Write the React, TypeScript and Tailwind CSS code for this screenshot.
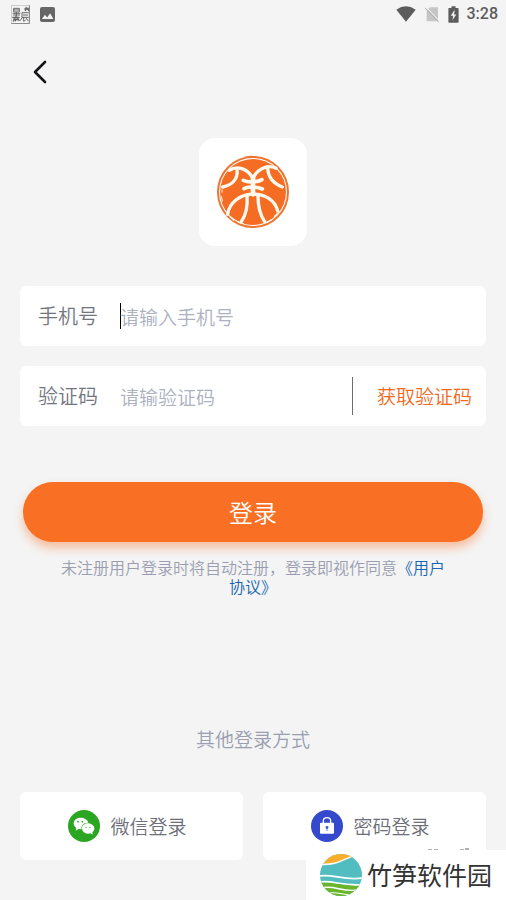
import React, { useState } from 'react';

const BackIcon = () => (
  <svg viewBox="0 0 14 24" className="h-6 w-[14px]" fill="none" stroke="#141418" strokeWidth="2.6" strokeLinecap="round" strokeLinejoin="round">
    <path d="M12 2 2 12l10 10" />
  </svg>
);

const GlyphBadge = () => (
  <svg viewBox="0 0 57 57" className="h-[19px] w-[19px]" fill="none" stroke="#666" strokeWidth="3">
    <path d="M1 56V1h54" stroke="#aaa" strokeWidth="2" />
    <path d="M55 1v55H1" stroke="#777" strokeWidth="3" />
    <path d="M8 10h17v11H8zM8 15h17M5 25h23M16 21v13M6 30h21" />
    <path d="M4 37h22M15 32v8M7 50l3-11M15 40l-2 9M19 38l6 10M9 44h13" strokeWidth="4" />
    <path d="M40 12h14M46 6l-3 12M50 8l3 10" strokeWidth="4" />
    <path d="M33 23h20M33 23v15l-5 9M36 30h15M33 37h20M38 37v12l6-4M44 38l8 10" />
  </svg>
);

const PictureIcon = () => (
  <svg viewBox="0 0 46 46" className="h-[15px] w-[15px]">
    <rect width="46" height="46" rx="6" fill="#666" />
    <path d="M6 37 15 24l7 8 9-13 10 18z" fill="#f5f5f5" />
  </svg>
);

const WifiIcon = () => (
  <svg viewBox="0 0 60 48" className="h-4 w-5" fill="#5c5c5c">
    <path d="M1 11Q30-9 59 11L30 47z" />
  </svg>
);

const NoSimIcon = () => (
  <svg viewBox="0 0 48 50" className="h-[17px] w-4">
    <path d="M18 3h24v42H8V13z" fill="#c6c6c6" />
    <path d="M7 3 48 47" stroke="#f5f5f5" strokeWidth="3" />
    <path d="M3 5 44 48" stroke="#b0b0b0" strokeWidth="3" />
  </svg>
);

const BatteryIcon = () => (
  <svg viewBox="0 0 32 50" className="h-[17px] w-[11px]">
    <path d="M10 1h12v5h7q2 0 2 2v39q0 2-2 2H3q-2 0-2-2V8q0-2 2-2h7z" fill="#5c5c5c" />
    <path d="M18 13 8 29h7l-2 13 11-17h-7l3-12z" fill="#f5f5f5" />
  </svg>
);

const BallLogo = () => (
  <svg viewBox="0 2 234 234" className="h-[78px] w-[78px]" fill="none" strokeLinecap="round" strokeLinejoin="round">
    <circle cx="117" cy="119" r="105" stroke="#ee7431" strokeWidth="6" />
    <circle cx="117" cy="119" r="99" fill="#f46d23" />
    <path d="M94 15q18-5 34 0" stroke="#ee7431" strokeWidth="4" />
    <g stroke="#fffaf0" strokeWidth="10">
      <path d="M46 54C70 38 104 50 117 80" />
      <path d="M186 48C160 34 126 52 117 80" />
      <path d="M69 50c4 30-14 48-43 54" />
      <path d="M161 44c0 30 14 48 44 60" />
      <path d="M117 76v50" strokeWidth="14" />
      <path d="M88 84q14 6 29 4 16 1 27-6" strokeWidth="11" />
      <path d="M90 109q12-6 27-4 16-1 28 5" strokeWidth="11" />
      <path d="M41 186C52 110 174 104 191 176" />
      <path d="M99 131c3 32-3 56-17 77" />
      <path d="M132 131c0 32 6 56 20 77" />
      <path d="m49 194 10 9M73 209l14 5M158 210l14-7M182 192l8-8" strokeWidth="4" />
      <path d="m22 132 3 14M24 112v8" strokeWidth="3" />
    </g>
  </svg>
);

const WechatIcon = () => (
  <svg viewBox="0 0 96 96" className="h-8 w-8">
    <circle cx="48" cy="48" r="48" fill="#2aa622" />
    <path d="M37 23c-11 0-20 7-20 17 0 6 3 10 8 14l-2 8 9-5 9 1c-3-12 7-21 20-20-2-9-12-15-24-15z" fill="#fff" />
    <path d="M59 40c-10 0-17 7-17 15 0 9 8 16 18 16l7-1 7 4-1-7c4-3 6-7 6-12 0-8-9-15-20-15z" fill="#fff" />
    <g fill="#2aa622">
      <circle cx="30" cy="35" r="2.5" />
      <circle cx="43" cy="35" r="2.5" />
      <circle cx="54" cy="52" r="2" />
      <circle cx="66" cy="52" r="2" />
    </g>
  </svg>
);

const LockIcon = () => (
  <svg viewBox="0 0 96 96" className="h-8 w-8">
    <circle cx="48" cy="48" r="48" fill="#3549cc" />
    <path d="M37 41V33q0-10 11-10t11 10v8" fill="none" stroke="#fff" strokeWidth="4" />
    <rect x="27" y="38" width="42" height="33" rx="3" fill="#fff" />
    <path d="M44 49h8v4l-3 4v6h-2v-6l-3-4z" fill="#3549cc" />
  </svg>
);

const BrandLogo = () => (
  <svg viewBox="0 0 124 124" className="h-[42px] w-[42px]">
    <defs>
      <clipPath id="brand-disc">
        <circle cx="62" cy="62" r="62" />
      </clipPath>
    </defs>
    <g clipPath="url(#brand-disc)">
      <rect width="124" height="124" fill="#52bdc0" />
      <path d="M0 0h124L98 8C68 18 56 29 12 29H0z" fill="#f9ae2b" />
      <path d="M8 31C50 31 62 20 94 7" stroke="#fff" strokeWidth="4" fill="none" />
      <path d="M0 84c30-5 54 10 124 8v38H0z" fill="#69b52c" />
      <path d="M-2 65c40-7 70 14 128 6" stroke="#fff" strokeWidth="5" fill="none" />
      <path d="M-2 83c40-7 66 13 128 7" stroke="#fff" strokeWidth="5" fill="none" />
      <path d="M4 100c40-9 62 14 108 6" stroke="#fff" strokeWidth="4" fill="none" />
      <path d="M20 117c26-8 40 3 66 3" stroke="#fff" strokeWidth="3" fill="none" />
    </g>
  </svg>
);

interface LoginOptionProps {
  icon: React.ReactNode;
  label: string;
}

const LoginOption: React.FC<LoginOptionProps> = ({ icon, label }) => (
  <button type="button" className="flex h-[68px] flex-1 items-center justify-center gap-[10px] rounded-md bg-white pr-2 text-[19px] text-[#6d6f78]">
    {icon}
    <span>{label}</span>
  </button>
);

const App: React.FC = () => {
  const [phone, setPhone] = useState('');
  const [code, setCode] = useState('');

  return (
    <div className="relative flex min-h-screen flex-col bg-[#f4f4f4] font-['Noto_Sans_CJK_SC',sans-serif] font-[350]">
      {/* Status bar */}
      <header className="flex h-7 items-center justify-between pr-2 pl-[11px]">
        <div className="flex items-center gap-[10px]">
          <GlyphBadge />
          <PictureIcon />
        </div>
        <div className="flex items-center gap-2">
          <WifiIcon />
          <NoSimIcon />
          <BatteryIcon />
          <span className="font-[Roboto,sans-serif] text-base font-medium text-[#5c5c5c]">3:28</span>
        </div>
      </header>

      <nav className="flex h-[88px] items-center px-[33px]">
        <button type="button" aria-label="返回">
          <BackIcon />
        </button>
      </nav>

      <main className="flex flex-1 flex-col px-5 pt-[22px] pb-10">
        <div className="flex size-[108px] items-center justify-center self-center rounded-2xl bg-white">
          <BallLogo />
        </div>

        <form className="mt-10 flex flex-col" onSubmit={(e) => e.preventDefault()}>
          <div className="flex h-[60px] items-center rounded-md bg-white pl-[18px]">
            <label htmlFor="phone" className="w-[82px] shrink-0 text-xl text-[#74767f]">手机号</label>
            <span className="-mr-px h-[26px] w-px shrink-0 bg-black" />
            <input
              id="phone"
              type="tel"
              value={phone}
              onChange={(e) => setPhone(e.target.value)}
              placeholder="请输入手机号"
              className="h-full min-w-0 flex-1 text-[19px] outline-none placeholder:text-[#acb1c0]"
            />
          </div>

          <div className="mt-5 flex h-[60px] items-center rounded-md bg-white pr-[14px] pl-[18px]">
            <label htmlFor="code" className="w-[82px] shrink-0 text-xl text-[#74767f]">验证码</label>
            <input
              id="code"
              type="text"
              value={code}
              onChange={(e) => setCode(e.target.value)}
              placeholder="请输验证码"
              className="h-full min-w-0 flex-1 text-[19px] outline-none placeholder:text-[#acb1c0]"
            />
            <span className="h-[38px] w-px bg-[#6b6b6b]" />
            <button type="button" className="ml-6 text-[19px] text-[#ef6a1d]">获取验证码</button>
          </div>

          <button
            type="submit"
            className="mx-[3px] mt-14 h-[60px] rounded-full bg-[#f96f23] text-2xl text-white shadow-[0_6px_10px_rgba(249,111,35,0.4)]"
          >
            登录
          </button>
        </form>

        <p className="mx-[38px] mt-4 text-center text-base leading-[19px] text-[#9a9eb0]">
          未注册用户登录时将自动注册，登录即视作同意<a href="#agreement" className="text-[#1666b0]">《用户协议》</a>
        </p>

        <h2 className="mt-auto text-center text-[19px] leading-7 text-[#9a9eb0]">其他登录方式</h2>
        <div className="mt-[39px] flex gap-5">
          <LoginOption icon={<WechatIcon />} label="微信登录" />
          <LoginOption icon={<LockIcon />} label="密码登录" />
        </div>
      </main>

      {/* Site mark, sits over the bottom corner */}
      <div className="absolute right-0 bottom-0 flex h-[50px] w-[200px] items-center gap-[5px] bg-white pl-[14px]">
        <BrandLogo />
        <span className="text-[25px] font-normal whitespace-nowrap text-[#333]">竹笋软件园</span>
        <svg viewBox="0 0 44 3" className="absolute -top-[2px] left-[122px] h-[3px] w-11" fill="#b0b0b0">
          <path d="M0 1h4v1H0zM6 1h4v1H6zM32 1h4v1h-4zM37 0h4v2h-4z" />
        </svg>
      </div>
    </div>
  );
};

export default App;
